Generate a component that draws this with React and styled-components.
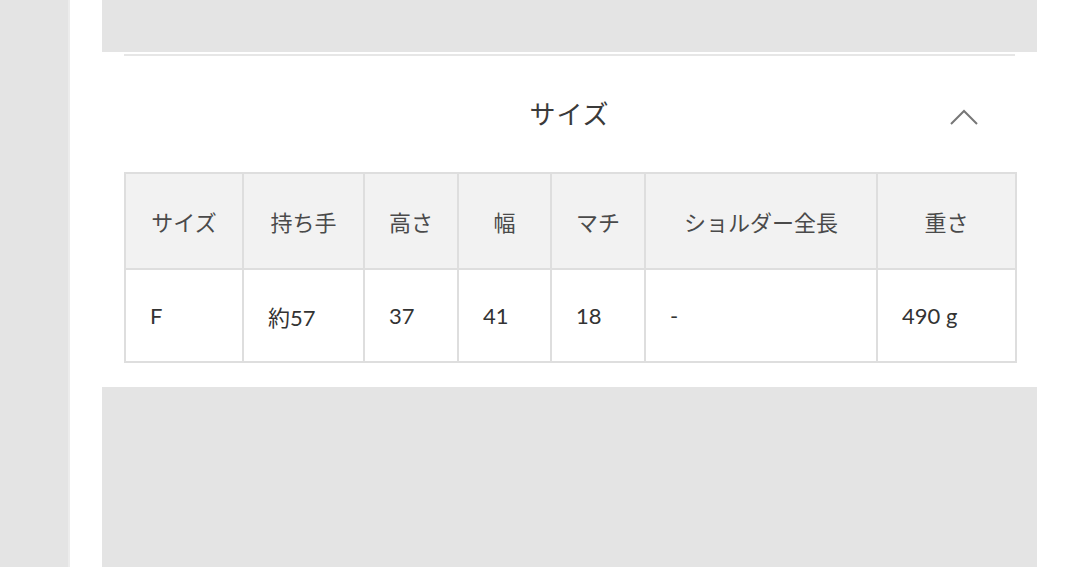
import React from 'react'
import styled, { createGlobalStyle } from 'styled-components'

const GlobalStyle = createGlobalStyle`
    html, body {
        margin: 0;
        padding: 0;
        background: #fff;
        font-family: Lato, "Noto Sans CJK JP", sans-serif;
        color: #333;
    }
`

const headers = ['サイズ', '持ち手', '高さ', '幅', 'マチ', 'ショルダー全長', '重さ']
const row = ['F', '約57', '37', '41', '18', '-', '490 g']
const widths = [118, 121, 94, 93, 94, 232, 139]

const App = () => {
    return (
        <Page>
            <GlobalStyle />
            <SideBar />
            <Main>
                <GrayBlock height={52} />
                <Panel>
                    <Divider />
                    <TitleRow>
                        <Title>サイズ</Title>
                        <Chevron viewBox="0 0 30 18">
                            <polyline points="2,16 15,3 28,16" />
                        </Chevron>
                    </TitleRow>
                    <SizeTable>
                        <colgroup>
                            {widths.map((w, i) => <col key={i} style={{ width: w }} />)}
                        </colgroup>
                        <thead>
                            <tr>
                                {headers.map(h => <Th key={h}>{h}</Th>)}
                            </tr>
                        </thead>
                        <tbody>
                            <tr>
                                {row.map((c, i) => <Td key={i}>{c}</Td>)}
                            </tr>
                        </tbody>
                    </SizeTable>
                </Panel>
                <GrayBlock height={180} />
            </Main>
        </Page>
    )
}

const Page = styled.div`
    display: flex;
    width: 1080px;
    height: 567px;
    overflow: hidden;
`

const SideBar = styled.div`
    width: 68px;
    flex-shrink: 0;
    background: #e4e4e4;
    border-right: 2px solid #ececec;
`

const Main = styled.div`
    margin-left: 32px;
    width: 935px;
    display: flex;
    flex-direction: column;
`

const GrayBlock = styled.div`
    height: ${p => p.height}px;
    background: #e4e4e4;
    flex-shrink: 0;
`

const Panel = styled.div`
    padding: 2px 22px 24px;
`

const Divider = styled.div`
    height: 2px;
    background: #e6e6e6;
`

const TitleRow = styled.div`
    position: relative;
    height: 116px;
    display: flex;
    justify-content: center;
    padding-top: 40px;
    box-sizing: border-box;
`

const Title = styled.h2`
    margin: 0;
    font-size: 26px;
    font-weight: 400;
    line-height: 36px;
    letter-spacing: 1px;
    color: #3a3a3a;
`

const Chevron = styled.svg`
    position: absolute;
    right: 36px;
    top: 52px;
    width: 30px;
    height: 18px;
    fill: none;
    stroke: #777;
    stroke-width: 2;
`

const SizeTable = styled.table`
    width: 891px;
    border-collapse: collapse;
    table-layout: fixed;
    font-size: 22px;
`

const Th = styled.th`
    height: 94px;
    padding: 0;
    background: #f2f2f2;
    border: 2px solid #dedede;
    font-weight: 400;
    text-align: center;
    color: #4a4a4a;
`

const Td = styled.td`
    height: 91px;
    padding: 0 0 0 24px;
    border: 2px solid #dedede;
    text-align: left;
    color: #333;
`

export default App
